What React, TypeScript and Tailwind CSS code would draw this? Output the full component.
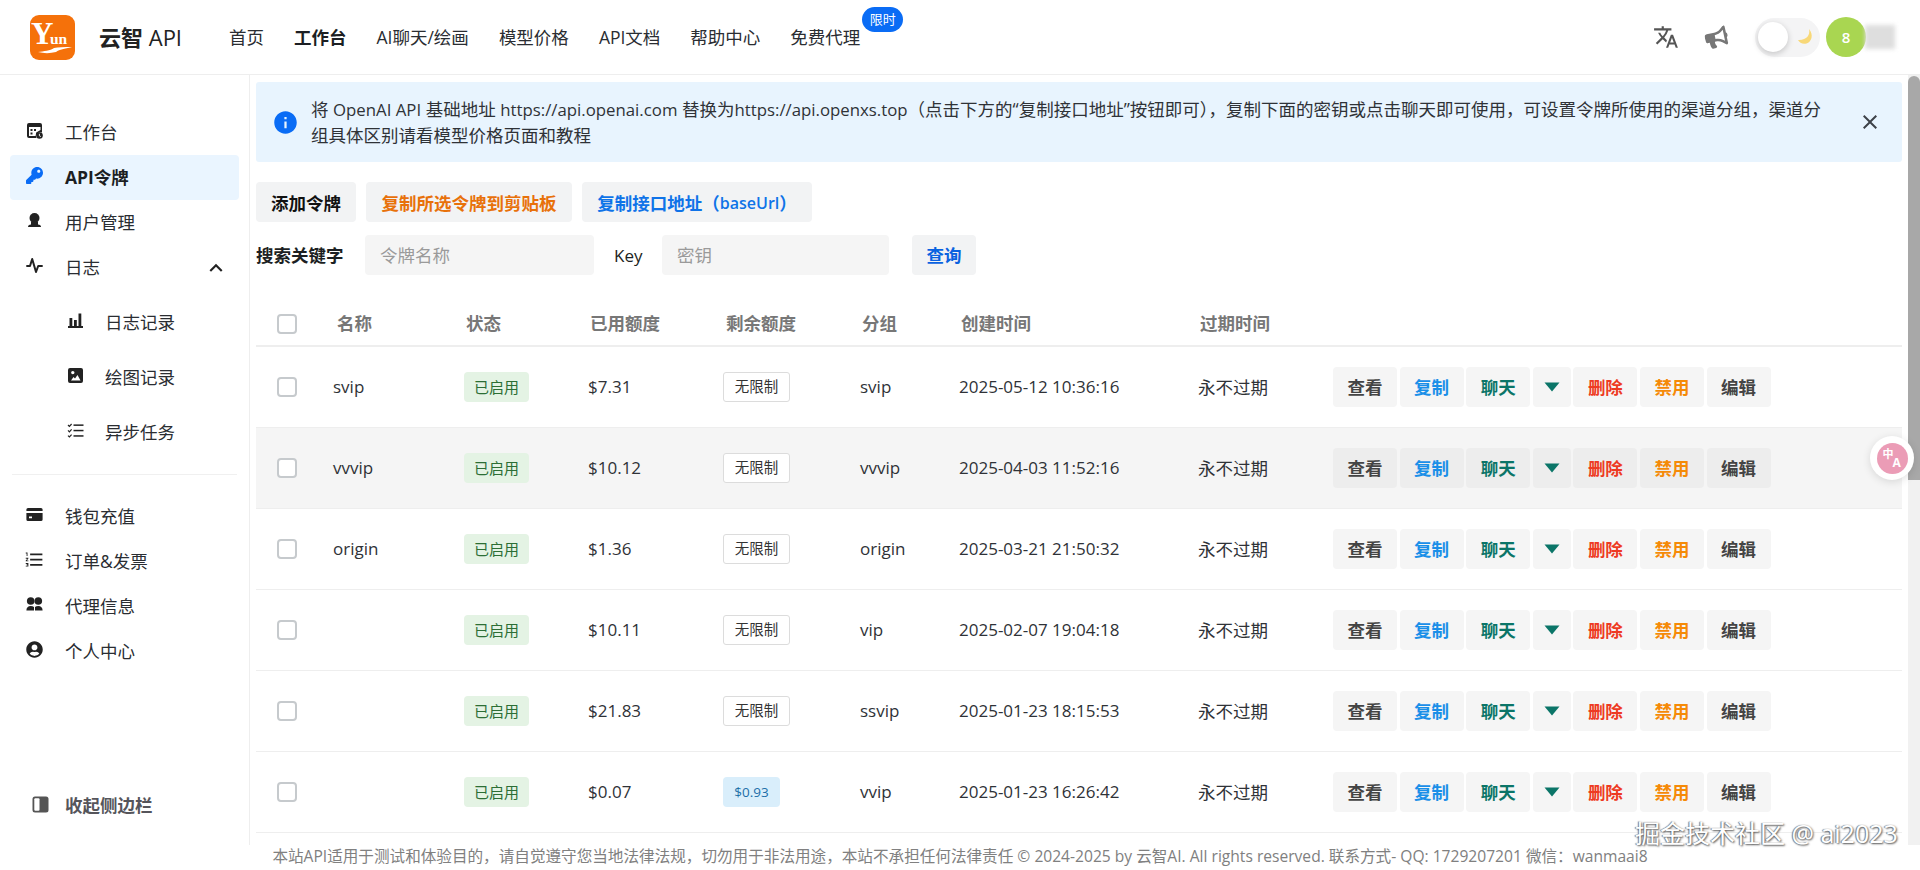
import React from "react";
import { FaKey, FaBullhorn, FaUserCircle } from "react-icons/fa";
import { MdTranslate, MdFormatListNumbered, MdClose, MdInfo, MdKeyboardArrowUp } from "react-icons/md";

const FONT = '"Open Sans","Noto Sans CJK SC",sans-serif';

function Logo() {
  return (
    <svg width="45" height="45" viewBox="0 0 45 45" className="shrink-0">
      <rect width="45" height="45" rx="9" fill="#f5710a" />
      <text x="1" y="29" fontFamily="Liberation Serif" fontWeight="700" fontSize="31" fill="#fff">Y</text>
      <text x="20" y="29" fontFamily="Liberation Serif" fontWeight="700" fontSize="15.5" fill="#fff">un</text>
      <path d="M8 37 C14 36 20 36 24 33 C28 32 34 32 42 32 C34 34 30 34 26 37 C20 38.5 14 38.5 8 37Z" fill="#fff" />
    </svg>
  );
}

const Ic = ({ children }: { children: React.ReactNode }) => (
  <svg width="17" height="17" viewBox="0 0 17 17" fill="#222" className="shrink-0">{children}</svg>
);

const CalIcon = () => (
  <Ic>
    <path d="M3 1h11a2 2 0 0 1 2 2v7.5a4.5 4.5 0 0 0-5.6 5.5H3a2 2 0 0 1-2-2V3a2 2 0 0 1 2-2Zm0 4v9h6.6l.6-3.5L14.5 8V5H3Z" />
    <rect x="4.5" y="7" width="2" height="2" /><rect x="8" y="7" width="2" height="2" /><rect x="4.5" y="10.5" width="2" height="2" />
    <circle cx="13.5" cy="13.5" r="3.3" /><path d="M13.4 11.8v2l1.4.8" stroke="#fff" strokeWidth="0.9" fill="none" />
  </Ic>
);
const UserIcon = () => (
  <Ic><circle cx="8.5" cy="6" r="5" /><path d="M5 10h7v2.5c2 .2 3 1 3 2.5H2c0-1.5 1-2.3 3-2.5V10Z" /></Ic>
);
const PulseIcon = () => (
  <Ic><path d="M0.3 9h3.7L6.2 2 10 15l2.2-6h4.5" fill="none" stroke="#222" strokeWidth="2" strokeLinejoin="round" /></Ic>
);
const BarsIcon = () => (
  <Ic><rect x="2.5" y="6" width="2.8" height="8" /><rect x="7" y="8" width="2.8" height="6" /><rect x="11.5" y="1.5" width="2.8" height="12.5" /><rect x="1" y="14" width="15" height="2" /></Ic>
);
const ImageIcon = () => (
  <Ic><path fillRule="evenodd" d="M3 1h11a2 2 0 0 1 2 2v11a2 2 0 0 1-2 2H3a2 2 0 0 1-2-2V3a2 2 0 0 1 2-2Zm1 12.5h9.5L10.5 8l-2.5 3.4L6.5 10 4 13.5ZM5.8 7.3a1.7 1.7 0 1 0 0-3.4 1.7 1.7 0 0 0 0 3.4Z" /></Ic>
);
const CheckListIcon = () => (
  <Ic>
    <path d="M1 3l1.4 1.4L4.6 2M1 8.4l1.4 1.4L4.6 7.4M1 13.6 2.4 15l2.2-2.4" stroke="#222" strokeWidth="1.2" fill="none" />
    <rect x="6.5" y="2.4" width="10" height="1.5" /><rect x="6.5" y="7.8" width="10" height="1.5" /><rect x="6.5" y="13.2" width="10" height="1.5" />
  </Ic>
);
const CardIcon = () => (
  <Ic><path fillRule="evenodd" d="M2 2h13a1.6 1.6 0 0 1 1.6 1.6V5H.4V3.6A1.6 1.6 0 0 1 2 2ZM.4 7h16.2v6.4A1.6 1.6 0 0 1 15 15H2a1.6 1.6 0 0 1-1.6-1.6V7Zm2.6 3.6v1.6h3v-1.6H3Z" /></Ic>
);
const GroupIcon = () => (
  <Ic><circle cx="4.7" cy="5" r="3.8" /><circle cx="12.3" cy="5" r="3.8" /><path d="M0.4 14.5c0-3 1.6-4.6 4.3-4.6 1.4 0 2.5.4 3.3 1.2v3.4H.4ZM9 11.1c.8-.8 1.9-1.2 3.3-1.2 2.7 0 4.3 1.6 4.3 4.6H9v-3.4Z" /></Ic>
);
const SideIcon = () => (
  <svg width="17" height="17" viewBox="0 0 17 17" className="shrink-0">
    <rect x="0.5" y="0.5" width="16" height="16" rx="2.5" fill="#555" />
    <rect x="2.3" y="2.3" width="5.2" height="12.4" rx="1" fill="#fff" />
  </svg>
);

function SideItem({ icon, label, active, right, sub, bold }: { icon: React.ReactNode; label: string; active?: boolean; right?: React.ReactNode; sub?: boolean; bold?: boolean }) {
  return (
    <div className={`mx-[10px] flex items-center rounded-[4px] ${sub ? "h-[55px] pl-[57px]" : "h-[45px] pl-[16px]"} ${active ? "bg-[#eaf5ff]" : ""}`}>
      <span className={`flex w-[17px] shrink-0 -translate-y-[2px] ${sub ? "mr-[21px]" : "mr-[22px]"}`}>{icon}</span>
      <span className={`-translate-y-[1px] text-[17.5px] leading-[24px] ${active ? "font-bold text-[#1c1f23]" : bold ? "font-bold text-[#55555b]" : "text-[#2a2d32]"}`}>{label}</span>
      {right}
    </div>
  );
}

const COLS = "grid grid-cols-[77px_131px_124px_135px_137px_99px_239px_135px_1fr] items-center";

function Checkbox() {
  return <span className="ml-[21px] block h-[20px] w-[20px] rounded-[4px] border-2 border-[#c6cacd] bg-white" />;
}

const rows = [
  { name: "svip", used: "$7.31", group: "svip", time: "2025-05-12 10:36:16" },
  { name: "vvvip", used: "$10.12", group: "vvvip", time: "2025-04-03 11:52:16", hover: true },
  { name: "origin", used: "$1.36", group: "origin", time: "2025-03-21 21:50:32" },
  { name: "", used: "$10.11", group: "vip", time: "2025-02-07 19:04:18" },
  { name: "", used: "$21.83", group: "ssvip", time: "2025-01-23 18:15:53" },
  { name: "", used: "$0.07", group: "vvip", time: "2025-01-23 16:26:42", remain: "$0.93" },
];

function ActionBtn({ label, color, bg }: { label: string; color: string; bg: string }) {
  return (
    <span className={`flex h-[40px] w-[64px] items-center justify-center rounded-[4px] text-[17.5px] font-semibold ${bg} ${color}`}>{label}</span>
  );
}

function Row({ r }: { r: (typeof rows)[number] }) {
  const bg = r.hover ? "bg-[#ededed]" : "bg-[#f5f5f5]";
  return (
    <div className={`${COLS} h-[81px] border-b border-[#eeeeee] text-[17px] text-[#2f3237] ${r.hover ? "bg-[#f5f5f5]" : ""}`}>
      <Checkbox />
      <span>{r.name}</span>
      <span className="flex h-[30px] w-[65px] items-center justify-center rounded-[4px] bg-[#e4f3e4] text-[15px] text-[#2c6e35]">已启用</span>
      <span>{r.used}</span>
      {r.remain ? (
        <span className="flex h-[30px] w-[57px] items-center justify-center rounded-[4px] bg-[#d9eefb] text-[13.5px] text-[#1c6fa8]">{r.remain}</span>
      ) : (
        <span className="flex h-[30px] w-[67px] items-center justify-center rounded-[3px] border border-[#dcdcdc] bg-white text-[14.5px] text-[#333]">无限制</span>
      )}
      <span>{r.group}</span>
      <span>{r.time}</span>
      <span className="text-[17.5px]">永不过期</span>
      <div className="flex items-center gap-[2.6px]">
        <ActionBtn label="查看" color="text-[#444444]" bg={bg} />
        <ActionBtn label="复制" color="text-[#1a8fe8]" bg={bg} />
        <ActionBtn label="聊天" color="text-[#0b7568]" bg={bg} />
        <span className={`flex h-[40px] w-[38px] items-center justify-center rounded-[4px] ${bg}`}>
          <svg width="16" height="10" viewBox="0 0 16 10"><path d="M0.5 0.5h15L8 9.5Z" fill="#0b7568" /></svg>
        </span>
        <ActionBtn label="删除" color="text-[#ee3a22]" bg={bg} />
        <ActionBtn label="禁用" color="text-[#f58a07]" bg={bg} />
        <ActionBtn label="编辑" color="text-[#444444]" bg={bg} />
      </div>
    </div>
  );
}

export default function App() {
  const L = "text-[16.8px] leading-none";
  return (
    <div className="relative flex h-[870px] w-full flex-col overflow-hidden bg-white" style={{ fontFamily: FONT }}>
      <header className="flex h-[75px] shrink-0 items-center border-b border-[#eeeeee] pl-[30px]">
        <Logo />
        <span className="ml-[24px] w-[130px] shrink-0 text-[22px] font-semibold leading-[28px] text-[#222]">云智 <span className="font-normal">API</span></span>
        <nav className="flex items-center gap-[30px] text-[17.5px] leading-[24px] text-[#2a2d32]">
          <span>首页</span>
          <span className="font-bold text-[#1c1f23]">工作台</span>
          <span>AI聊天/绘画</span>
          <span>模型价格</span>
          <span>API文档</span>
          <span>帮助中心</span>
          <span className="relative">
            免费代理
            <span className="absolute -top-[18px] left-[72px] flex h-[25px] w-[41px] items-center justify-center rounded-full bg-[#0a6cf5] text-[13px] leading-none text-white">限时</span>
          </span>
        </nav>
        <div className="ml-auto flex items-center pr-[25px]">
          <MdTranslate className="mr-[26px] text-[26px] text-[#555]" />
          <FaBullhorn className="mr-[27px] -rotate-12 text-[23px] text-[#777]" />
          <div className="relative mr-[6px] flex h-[39px] w-[65px] items-center rounded-full bg-[#f4f4f5] pl-[3px]">
            <span className="h-[30px] w-[30px] rounded-full bg-white shadow-[0_2px_6px_rgba(0,0,0,0.2)]" />
            <svg width="18" height="18" viewBox="0 0 18 18" className="ml-[8px]"><path d="M13 1c1.5 6-2.5 11.5-11 11 1.5 3 5 4.6 8.5 3.5C15.5 14 18 7 13 1Z" fill="#f8d878" /></svg>
          </div>
          <span className="flex h-[40px] w-[40px] items-center justify-center rounded-full bg-[#a9d651] text-[15px] font-semibold text-white">8</span>
          <span className="-ml-[1px] h-[24px] w-[30px] bg-[#dedede] blur-[2px]" />
        </div>
      </header>

      <div className="flex min-h-0 flex-1">
        <aside className="flex w-[250px] shrink-0 flex-col border-r border-[#eeeeee] pb-[18px] pt-[35px]">
          <SideItem icon={<CalIcon />} label="工作台" />
          <SideItem icon={<FaKey className="text-[17px] text-[#0a6cf5]" />} label="API令牌" active />
          <SideItem icon={<UserIcon />} label="用户管理" />
          <SideItem icon={<PulseIcon />} label="日志" right={<MdKeyboardArrowUp className="ml-[103px] text-[26px] text-[#222]" />} />
          <div className="mt-[5px]">
            <SideItem sub icon={<BarsIcon />} label="日志记录" />
            <SideItem sub icon={<ImageIcon />} label="绘图记录" />
            <SideItem sub icon={<CheckListIcon />} label="异步任务" />
          </div>
          <div className="mx-[12px] mb-[19px] mt-[14px] border-t border-[#f0f0f0]" />
          <SideItem icon={<CardIcon />} label="钱包充值" />
          <SideItem icon={<MdFormatListNumbered className="text-[21px] -ml-[2px] shrink-0 text-[#222]" />} label="订单&发票" />
          <SideItem icon={<GroupIcon />} label="代理信息" />
          <SideItem icon={<FaUserCircle className="text-[17px] text-[#222]" />} label="个人中心" />
          <div className="mt-auto flex h-[45px] items-center pl-[32px]">
            <span className="mr-[16px] flex"><SideIcon /></span>
            <span className="text-[17.5px] font-bold leading-[24px] text-[#55555b]">收起侧边栏</span>
          </div>
        </aside>

        <main className="min-w-0 flex-1 pl-[6px] pr-[6px] pt-[7px]">
          <div className="flex h-[80px] items-center rounded-[3px] bg-[#e8f4fe] pl-[16px] pr-[20px]">
            <MdInfo className="shrink-0 text-[27px] text-[#0a6cf5]" />
            <p className="ml-[12px] flex-1 text-[17.5px] leading-[26px] text-[#2f3237]">
              将 <span className={L}>OpenAI API</span> 基础地址 <span className={L}>https://api.openai.com</span> 替换为<span className={L}>https://api.openxs.top</span>（点击下方的“复制接口地址”按钮即可），复制下面的密钥或点击聊天即可使用，可设置令牌所使用的渠道分组，渠道分组具体区别请看模型价格页面和教程
            </p>
            <MdClose className="ml-[32px] shrink-0 text-[24px] text-[#3d4148]" />
          </div>

          <div className="mt-[20px] flex gap-[10px] text-[17.5px] font-semibold">
            <span className="flex h-[40px] w-[100px] items-center justify-center rounded-[4px] bg-[#f2f3f4] pt-[2px] text-[#111]">添加令牌</span>
            <span className="flex h-[40px] w-[206px] items-center justify-center rounded-[4px] bg-[#f2f3f4] pt-[2px] text-[#e8710a]">复制所选令牌到剪贴板</span>
            <span className="flex h-[40px] w-[230px] items-center justify-center rounded-[4px] bg-[#f2f3f4] pt-[2px] text-[#0f73e8]">复制接口地址（<span className="text-[16px]">baseUrl</span>）</span>
          </div>

          <div className="mt-[13px] flex items-center text-[17.5px]">
            <span className="w-[109px] pt-[1px] font-bold text-[#1c1f23]">搜索关键字</span>
            <input className="h-[40px] w-[229px] rounded-[4px] bg-[#f5f5f5] pl-[15px] text-[17.5px] outline-none placeholder:text-[#9a9a9a]" placeholder="令牌名称" readOnly />
            <span className="ml-[20px] w-[48px] pt-[1px] text-[17px] text-[#1c1f23]">Key</span>
            <input className="h-[40px] w-[227px] rounded-[4px] bg-[#f5f5f5] pl-[15px] text-[17.5px] outline-none placeholder:text-[#9a9a9a]" placeholder="密钥" readOnly />
            <span className="ml-[23px] flex h-[40px] w-[64px] items-center justify-center rounded-[4px] bg-[#f2f3f4] pt-[1px] font-bold text-[#0a62e0]">查询</span>
          </div>

          <div className={`${COLS} mt-[26px] h-[46px] border-b-2 border-[#eeeeee] pt-[1px] text-[17.5px] font-bold text-[#777]`}>
            <Checkbox />
            <span className="ml-[4px]">名称</span>
            <span className="ml-[2px]">状态</span>
            <span className="ml-[2px]">已用额度</span>
            <span className="ml-[3px]">剩余额度</span>
            <span className="ml-[2px]">分组</span>
            <span className="ml-[2px]">创建时间</span>
            <span className="ml-[2px]">过期时间</span>
            <span />
          </div>
          {rows.map((r) => (
            <Row key={r.time} r={r} />
          ))}
        </main>

        <div className="w-[12px] shrink-0 bg-[#f1f1f1]">
          <div className="mt-[1px] h-[404px] rounded-t-[6px] bg-[#a8a8a8]" />
        </div>
      </div>

      <footer className="flex h-[25px] shrink-0 items-center justify-center pb-[2px] text-[15.6px] leading-none text-[#808080]">
        本站API适用于测试和体验目的，请自觉遵守您当地法律法规，切勿用于非法用途，本站不承担任何法律责任 © 2024-2025 by 云智AI. All rights reserved. 联系方式- QQ: 1729207201 微信：wanmaai8
      </footer>

      <div className="absolute right-[6px] top-[436px] flex h-[44px] w-[44px] items-center justify-center rounded-full bg-white shadow-[0_2px_8px_rgba(0,0,0,0.12)]">
        <span className="relative h-[31px] w-[31px] rounded-full bg-[#eb9cb6] font-bold leading-none text-white">
          <span className="absolute left-[6px] top-[5px] text-[11px]">中</span>
          <span className="absolute left-[16px] top-[14px] text-[12px]">A</span>
        </span>
      </div>

      <div className="absolute left-[1635px] top-[815px] text-[25px] leading-[36px] text-white [text-shadow:1px_1px_2px_#555,-1px_0_1px_#777]">
        掘金技术社区 @ ai2023
      </div>
    </div>
  );
}
